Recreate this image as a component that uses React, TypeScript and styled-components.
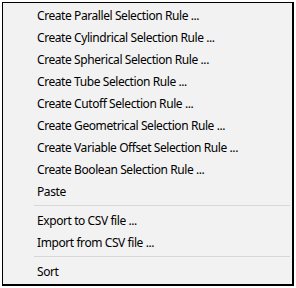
import React from "react";
import styled, { createGlobalStyle } from "styled-components";

const Global = createGlobalStyle`
  html, body { margin: 0; padding: 0; background: #ffffff; }
  body { width: 296px; height: 288px; overflow: hidden; }
`;

const Frame = styled.div`
  padding: 2px;
  width: 296px;
  height: 288px;
  box-sizing: border-box;
`;

const Menu = styled.div`
  box-sizing: border-box;
  height: 100%;
  background: #f2f2f2;
  border-top: 1px solid #000;
  border-left: 1px solid #000;
  border-right: 2px solid #000;
  border-bottom: 2px solid #000;
  padding: 2px 2px;
  display: flex;
  flex-direction: column;
  font-family: "Noto Sans", "Open Sans", sans-serif;
  font-size: 12px;
  letter-spacing: -0.42px;
  color: #000;
`;

const Item = styled.div`
  height: 22px;
  display: flex;
  align-items: center;
  padding-left: 32px;
  white-space: nowrap;
`;

const Separator = styled.div`
  height: 1px;
  background: #d7d7d7;
  margin: 3px 0 3px 29px;
`;

const groups: string[][] = [
  [
    "Create Parallel Selection Rule ...",
    "Create Cylindrical Selection Rule ...",
    "Create Spherical Selection Rule ...",
    "Create Tube Selection Rule ...",
    "Create Cutoff Selection Rule ...",
    "Create Geometrical Selection Rule ...",
    "Create Variable Offset Selection Rule ...",
    "Create Boolean Selection Rule ...",
    "Paste",
  ],
  ["Export to CSV file ...", "Import from CSV file ..."],
  ["Sort"],
];

export default function App() {
  return (
    <>
      <Global />
      <Frame>
        <Menu>
          {groups.map((g, gi) => (
            <React.Fragment key={gi}>
              {gi > 0 && <Separator />}
              {g.map((t) => (
                <Item key={t}>{t}</Item>
              ))}
            </React.Fragment>
          ))}
        </Menu>
      </Frame>
    </>
  );
}
